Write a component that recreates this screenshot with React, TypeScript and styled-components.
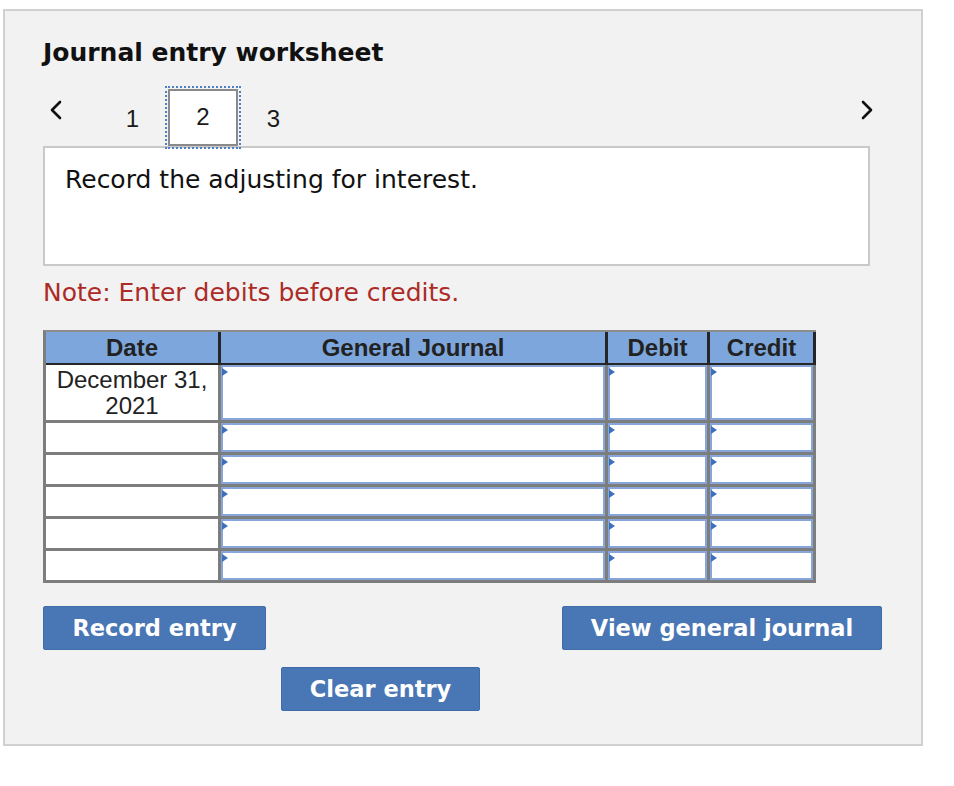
import styled, { createGlobalStyle } from 'styled-components';

const GlobalStyle = createGlobalStyle`
  html, body {
    margin: 0;
    padding: 0;
    background: #ffffff;
  }
  * {
    box-sizing: border-box;
  }
`;

const rows = [
  { date: 'December 31, 2021', tall: true },
  { date: '', tall: false },
  { date: '', tall: false },
  { date: '', tall: false },
  { date: '', tall: false },
  { date: '', tall: false },
];

const Chevron = ({ dir }: { dir: 'left' | 'right' }) => (
  <svg width="14" height="22" viewBox="0 0 14 22">
    <polyline
      points={dir === 'left' ? '11,3 3,11 11,19' : '3,3 11,11 3,19'}
      fill="none"
      stroke="#111"
      strokeWidth="2.6"
      strokeLinecap="round"
      strokeLinejoin="round"
    />
  </svg>
);

const App = () => {
  return (
    <>
      <GlobalStyle />
      <Panel>
        <Title>Journal entry worksheet</Title>

        <Nav>
          <ArrowButton>
            <Chevron dir="left" />
          </ArrowButton>
          <PageList>
            <PageItem>1</PageItem>
            <PageItem $active>2</PageItem>
            <PageItem>3</PageItem>
          </PageList>
          <ArrowButton $right>
            <Chevron dir="right" />
          </ArrowButton>
        </Nav>

        <Description>Record the adjusting for interest.</Description>

        <Note>Note: Enter debits before credits.</Note>

        <Table>
          <HeadCell>Date</HeadCell>
          <HeadCell>General Journal</HeadCell>
          <HeadCell>Debit</HeadCell>
          <HeadCell>Credit</HeadCell>
          {rows.map((row, i) => (
            <Row key={i} $tall={row.tall}>
              <DateCell>{row.date}</DateCell>
              <InputCell>
                <Marker />
                <Field />
              </InputCell>
              <InputCell>
                <Marker />
                <Field />
              </InputCell>
              <InputCell>
                <Marker />
                <Field />
              </InputCell>
            </Row>
          ))}
        </Table>

        <ButtonRow>
          <ActionButton $width={223}>Record entry</ActionButton>
          <ActionButton $width={320}>View general journal</ActionButton>
        </ButtonRow>
        <ClearRow>
          <ActionButton $width={199}>Clear entry</ActionButton>
        </ClearRow>
      </Panel>
    </>
  );
};

const Panel = styled.div`
  margin: 9px 0 0 3px;
  width: 920px;
  height: 737px;
  background: #f2f2f2;
  border: 2px solid #d0d0d0;
  padding: 27px 0 0 38px;
`;

const Title = styled.h1`
  margin: 0;
  font-family: 'DejaVu Sans', Verdana, sans-serif;
  font-weight: bold;
  font-size: 25px;
  line-height: 30px;
  color: #111;
`;

const Nav = styled.div`
  display: flex;
  align-items: center;
  width: 831px;
  height: 61px;
  margin-top: 17px;
`;

const ArrowButton = styled.div<{ $right?: boolean }>`
  display: flex;
  align-self: flex-start;
  margin-top: 14px;
  margin-left: ${(p) => (p.$right ? 'auto' : '6px')};
`;

const PageList = styled.div`
  display: flex;
  align-items: center;
  margin-left: 34px;
  height: 100%;
`;

const PageItem = styled.div<{ $active?: boolean }>`
  width: ${(p) => (p.$active ? '70px' : '71px')};
  height: ${(p) => (p.$active ? '57px' : 'auto')};
  display: flex;
  align-items: center;
  justify-content: center;
  margin-top: ${(p) => (p.$active ? '3px' : '6px')};
  font-family: 'Liberation Sans', Arial, sans-serif;
  font-size: 24px;
  color: #1a1a1a;
  background: ${(p) => (p.$active ? '#ffffff' : 'transparent')};
  border: ${(p) => (p.$active ? '2px solid #8a8a8a' : 'none')};
  outline: ${(p) => (p.$active ? '2px dotted #4f7fc6' : 'none')};
  outline-offset: 1px;
`;

const Description = styled.div`
  width: 827px;
  height: 120px;
  background: #ffffff;
  border: 2px solid #c9c9c9;
  padding: 17px 20px;
  font-family: 'DejaVu Sans', Verdana, sans-serif;
  font-size: 25px;
  line-height: 30px;
  color: #111;
`;

const Note = styled.p`
  margin: 12px 0 0;
  font-family: 'DejaVu Sans', Verdana, sans-serif;
  font-size: 25px;
  line-height: 30px;
  color: #ad2b26;
`;

const Table = styled.div`
  display: grid;
  grid-template-columns: 175px 387px 102px 106px;
  grid-template-rows: 33px;
  width: 773px;
  margin-top: 22px;
  border-top: 2px solid #8c8c8c;
  border-left: 3px solid #7d7d7d;
  background: #ffffff;
`;

const HeadCell = styled.div`
  display: flex;
  align-items: center;
  justify-content: center;
  background: #7da7dc;
  border-right: 3px solid #262626;
  border-bottom: 2px solid #262626;
  font-family: 'Liberation Sans', Arial, sans-serif;
  font-weight: bold;
  font-size: 24px;
  color: #222;
`;

const Row = styled.div<{ $tall: boolean }>`
  display: contents;

  & > div {
    height: ${(p) => (p.$tall ? '58px' : '32px')};
  }
`;

const DateCell = styled.div`
  border-right: 3px solid #7d7d7d;
  border-bottom: 3px solid #7d7d7d;
  padding: 2px 4px 0;
  text-align: center;
  font-family: 'Liberation Sans', Arial, sans-serif;
  font-size: 24px;
  line-height: 26px;
  color: #222;
`;

const InputCell = styled.div`
  position: relative;
  border-right: 3px solid #7d7d7d;
  border-bottom: 3px solid #7d7d7d;
  background: #ffffff;
`;

const Field = styled.div`
  width: 100%;
  height: 100%;
  border: 2px solid #86a6da;
  background: #ffffff;
`;

const Marker = styled.span`
  position: absolute;
  top: 3px;
  left: 1px;
  width: 0;
  height: 0;
  border-top: 4px solid transparent;
  border-bottom: 4px solid transparent;
  border-left: 6px solid #3c70bd;
`;

const ButtonRow = styled.div`
  display: flex;
  justify-content: space-between;
  width: 839px;
  margin-top: 23px;
`;

const ClearRow = styled.div`
  display: flex;
  margin: 17px 0 0 238px;
`;

const ActionButton = styled.button<{ $width: number }>`
  width: ${(p) => p.$width}px;
  height: 44px;
  padding: 0;
  background: #4976b4;
  border: 1px solid #3f6ba8;
  border-radius: 2px;
  color: #ffffff;
  font-family: 'DejaVu Sans', Verdana, sans-serif;
  font-weight: bold;
  font-size: 22.5px;
  cursor: pointer;
`;

export default App;
